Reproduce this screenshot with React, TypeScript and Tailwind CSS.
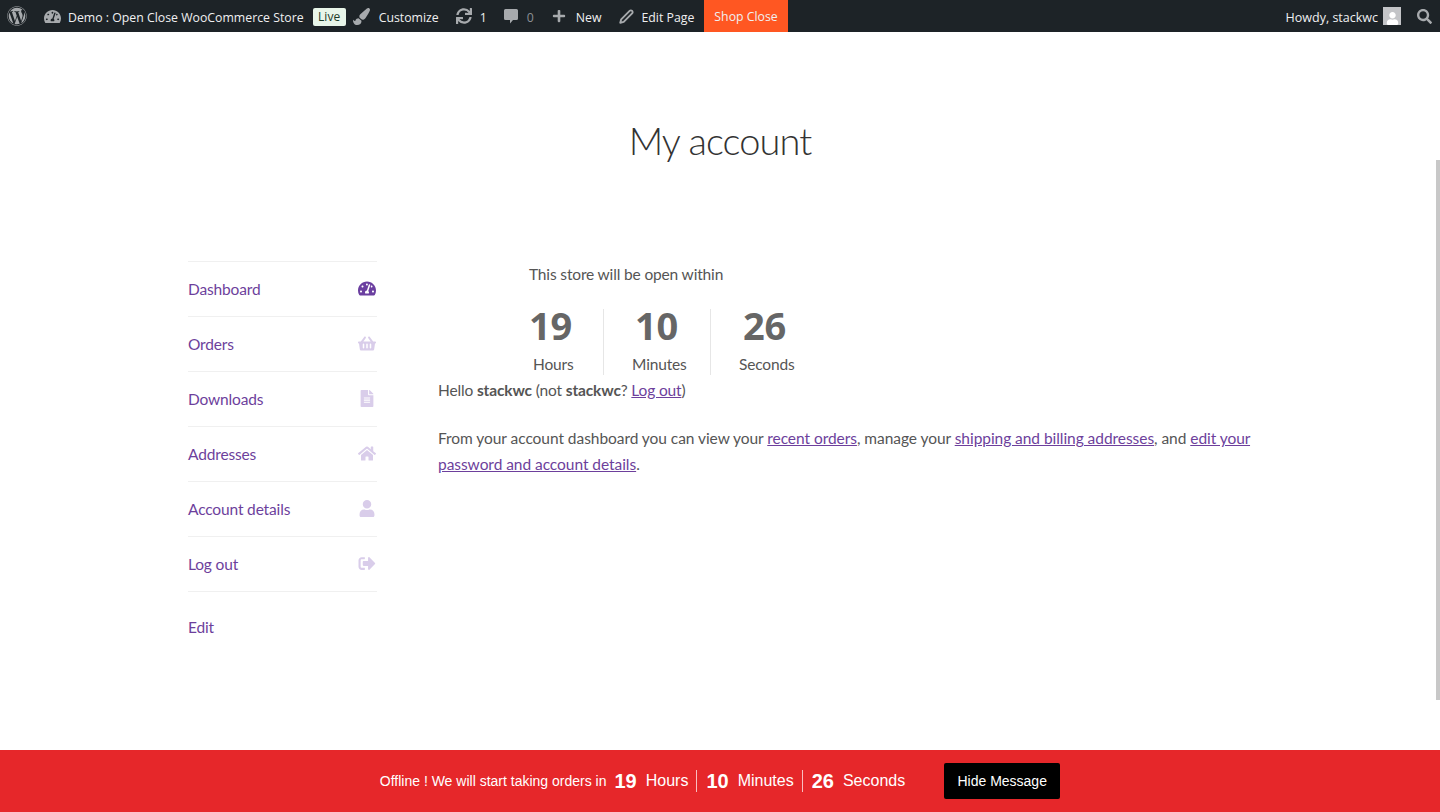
import { FaWordpress, FaTachometerAlt, FaPaintBrush, FaSync, FaPlus, FaSearch, FaShoppingBasket, FaFileAlt, FaHome, FaUser, FaSignOutAlt } from "react-icons/fa";
import { FiEdit2 } from "react-icons/fi";
import type { IconType } from "react-icons";

const navItems: { label: string; icon: IconType; active?: boolean }[] = [
  { label: "Dashboard", icon: FaTachometerAlt, active: true },
  { label: "Orders", icon: FaShoppingBasket },
  { label: "Downloads", icon: FaFileAlt },
  { label: "Addresses", icon: FaHome },
  { label: "Account details", icon: FaUser },
  { label: "Log out", icon: FaSignOutAlt },
];

function CommentIcon() {
  return (
    <svg viewBox="0 0 16 16" className="ml-[16px] h-[16px] w-[16px] text-[#a7aaad]" fill="currentColor">
      <path d="M2.5 1h11A1.5 1.5 0 0 1 15 2.5v8a1.5 1.5 0 0 1-1.5 1.5H10l-3 3.5V12H2.5A1.5 1.5 0 0 1 1 10.5v-8A1.5 1.5 0 0 1 2.5 1z" />
    </svg>
  );
}

function AdminBar() {
  return (
    <div className="flex h-8 shrink-0 items-center justify-between bg-[#1d2327] pl-[7px] font-['Open_Sans',sans-serif] text-[12.3px] tracking-normal text-[#f0f0f1]">
      <div className="flex h-full items-center">
        <FaWordpress className="h-5 w-5 text-[#a7aaad]" />
        <FaTachometerAlt className="ml-[17px] h-[17px] w-[17px] text-[#a7aaad]" />
        <span className="ml-[7px] mt-[4px]">Demo : Open Close WooCommerce Store</span>
        <span className="ml-[9px] mt-[1px] rounded-[2px] bg-[#e8f5e9] px-[5.5px] text-[12px] leading-[18px] text-[#1d3a27]">Live</span>
        <FaPaintBrush className="ml-[7px] h-[17px] w-[17px] text-[#a7aaad]" />
        <span className="ml-[9px] mt-[4px]">Customize</span>
        <FaSync className="ml-[17px] h-[16px] w-[16px] text-[#a7aaad]" />
        <span className="ml-[8px] mt-[4px]">1</span>
        <CommentIcon />
        <span className="ml-[8px] mt-[4px] text-[#8c8f94]">0</span>
        <FaPlus className="ml-[18px] h-[14px] w-[14px] text-[#a7aaad]" />
        <span className="ml-[10px] mt-[4px]">New</span>
        <FiEdit2 className="ml-[17px] h-[15px] w-[15px] stroke-[3px] text-[#a7aaad]" />
        <span className="ml-[8px] mt-[4px]">Edit Page</span>
        <span className="ml-[10px] flex h-full items-center bg-[#ff5722] px-[10px] pt-[3px]">Shop Close</span>
      </div>
      <div className="flex h-full items-center text-[12.5px]">
        <span className="mt-[4px]">Howdy, stackwc</span>
        <span className="ml-[5px] flex h-[18px] w-[18px] items-end justify-center overflow-hidden bg-[#c3c4c7]">
          <FaUser className="h-[13px] w-[13px] text-white" />
        </span>
        <FaSearch className="ml-[16px] mr-[8px] h-[15px] w-[15px] text-[#a7aaad]" />
      </div>
    </div>
  );
}

function Countdown() {
  const cols = [
    { n: "19", l: "Hours", w: "w-[75px]", nx: "", lx: "ml-[4px]" },
    { n: "10", l: "Minutes", w: "w-[107px]", nx: "ml-[31px]", lx: "ml-[28px]" },
    { n: "26", l: "Seconds", w: "w-[100px]", nx: "ml-[32px]", lx: "ml-[28px]" },
  ];
  return (
    <div className="ml-[91px]">
      <p className="h-[26px] leading-[26px]">This store will be open within</p>
      <div className="mb-[2px] mt-[22px] flex h-[66px]">
        {cols.map((c, i) => (
          <div key={c.l} className={`${c.w} ${i < 2 ? "border-r border-[#e6e6e6]" : ""}`}>
            <div className={`${c.nx} font-['Noto_Sans',sans-serif] -mt-[2px] text-[38px] font-bold leading-[36px] tracking-[-0.3px] text-[#666666]`}>{c.n}</div>
            <div className={`${c.lx} mt-[8px] leading-[26px]`}>{c.l}</div>
          </div>
        ))}
      </div>
    </div>
  );
}

export default function App() {
  return (
    <div className="flex h-screen flex-col overflow-hidden bg-white font-['Lato',sans-serif] text-[15.5px] tracking-[-0.15px] text-[#555555]">
      <AdminBar />
      <div className="relative flex-1">
        <div className="absolute right-0 top-[128px] h-[540px] w-[4px] bg-[#c8c8c8]" />
        <h1 className="pt-[83px] text-center text-[38px] font-light leading-[50px] tracking-[-0.9px] text-[#333333]">My account</h1>
        <div className="mt-[96px] flex pl-[188px]">
          <nav className="w-[189px] shrink-0">
            <ul className="border-t border-[#f0f0f0]">
              {navItems.map((item) => (
                <li key={item.label} className="flex h-[55px] items-center justify-between border-b border-[#f0f0f0] text-[#6d3f9c]">
                  <span className="mt-[2px]">{item.label}</span>
                  <item.icon className={`mb-[2px] mr-px h-[17px] w-[18px] ${item.active ? "text-[#6b3fa0]" : "text-[#d9cdea]"}`} />
                </li>
              ))}
            </ul>
            <div className="mt-[24px] text-[#6d3f9c]">Edit</div>
          </nav>
          <div className="ml-[61px] w-[830px]">
            <Countdown />
            <p className="h-[26px] leading-[26px]">
              Hello <b>stackwc</b> (not <b>stackwc</b>? <a className="text-[#6d3f9c] underline">Log out</a>)
            </p>
            <p className="mt-[22px] leading-[26px] tracking-[-0.05px]">
              From your account dashboard you can view your <a className="text-[#6d3f9c] underline">recent orders</a>, manage your <a className="text-[#6d3f9c] underline">shipping and billing addresses</a>, and <a className="text-[#6d3f9c] underline">edit your</a>{" "}
              <a className="text-[#6d3f9c] underline">password and account details</a>.
            </p>
          </div>
        </div>
      </div>
      <div className="flex h-[62px] shrink-0 items-center justify-center bg-[#e6272a] font-['Liberation_Sans',sans-serif] tracking-normal text-white">
        <span className="text-[14px]">Offline ! We will start taking orders in</span>
        <b className="ml-[8px] text-[20px]">19</b>
        <span className="ml-[9px] text-[16px]">Hours</span>
        <span className="ml-[8px] h-[22px] border-l border-white/70" />
        <b className="ml-[9px] text-[20px]">10</b>
        <span className="ml-[9px] text-[16px]">Minutes</span>
        <span className="ml-[8px] h-[22px] border-l border-white/70" />
        <b className="ml-[9px] text-[20px]">26</b>
        <span className="ml-[9px] text-[16px]">Seconds</span>
        <span className="ml-[39px] flex h-[36px] w-[116px] items-center justify-center rounded-[2px] bg-black text-[14px]">Hide Message</span>
      </div>
    </div>
  );
}
